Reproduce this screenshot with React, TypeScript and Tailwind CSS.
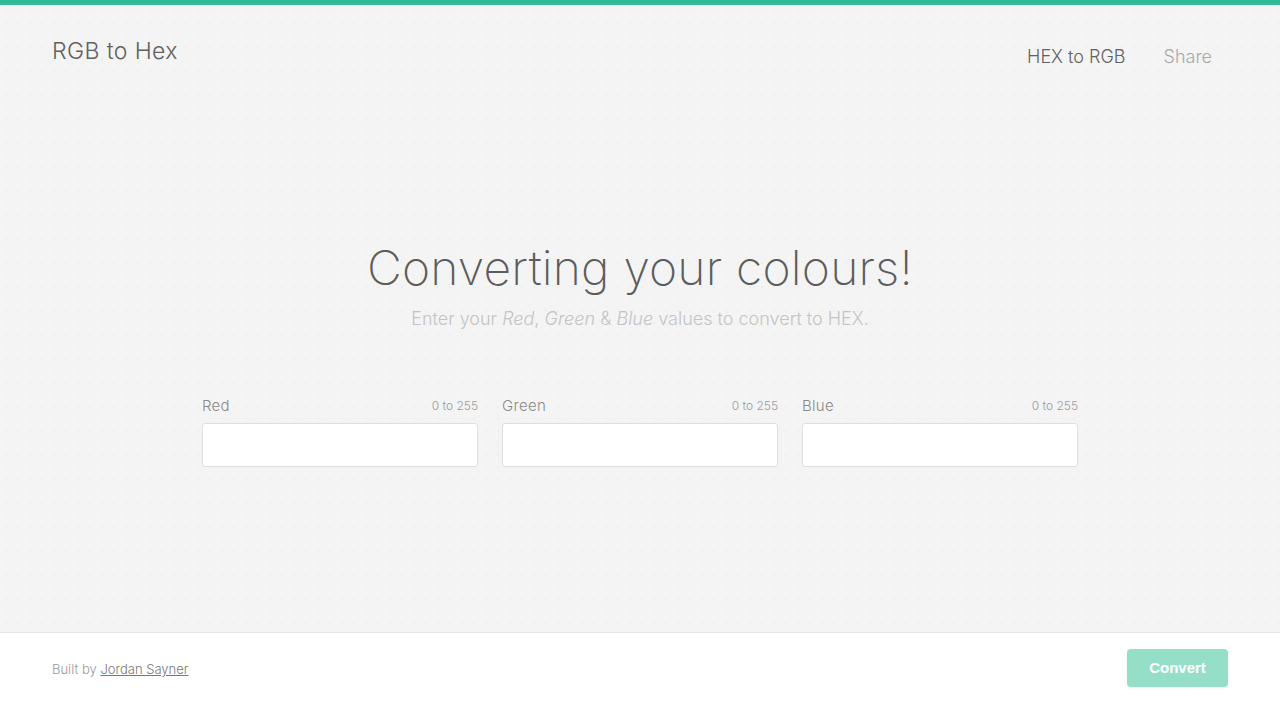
import React from "react";

const fields = [
  { label: "Red", hint: "0 to 255" },
  { label: "Green", hint: "0 to 255" },
  { label: "Blue", hint: "0 to 255" },
];

export default function App() {
  return (
    <div className="flex h-[703px] flex-col bg-white font-['Inter','Open_Sans',sans-serif] font-light text-[#616161]">
      <div className="h-[5px] bg-[#2fbb98]" />

      <main className="flex flex-1 flex-col bg-[#f4f4f4] bg-[radial-gradient(#eeeeee_1px,transparent_1px)] bg-[length:12px_12px]">
        <header className="flex items-start justify-between pl-[52px] pr-[68px] pt-[33px]">
          <h1 className="text-[23px] leading-[26px] tracking-[0.4px]">RGB to Hex</h1>
          <nav className="mt-[8px] flex gap-[38px] text-[18px] leading-[22px]">
            <a className="text-[#616161]">HEX to RGB</a>
            <a className="text-[#a8a8a8]">Share</a>
          </nav>
        </header>

        <section className="mt-[172px] flex flex-col items-center">
          <h2 className="text-[48px] leading-[56px] font-extralight tracking-[0.2px] text-[#5c5c5c]">
            Converting your colours!
          </h2>
          <p className="mt-[11px] text-[18px] leading-[24px] text-[#c4c4c4]">
            Enter your <em>Red</em>, <em>Green</em> &amp; <em>Blue</em> values to convert to HEX.
          </p>
        </section>

        <form className="mx-auto mt-[65px] grid w-[876px] grid-cols-3 gap-[24px]">
          {fields.map((f) => (
            <label key={f.label} className="flex flex-col">
              <div className="mb-[7px] flex items-end justify-between">
                <span className="text-[15px] leading-[20px] tracking-[0.3px] text-[#8a8a8a]">{f.label}</span>
                <span className="mb-[2px] text-[12px] leading-[16px] text-[#9a9a9a]">{f.hint}</span>
              </div>
              <input
                type="text"
                className="h-[44px] rounded-[3px] border border-[#dedede] bg-white px-3 outline-none"
              />
            </label>
          ))}
        </form>
      </main>

      <footer className="flex h-[71px] items-center justify-between border-t border-[#e6e6e6] bg-white pl-[52px] pr-[52px]">
        <p className="mt-[4px] text-[13px] text-[#9a9a9a]">
          Built by <a className="text-[#777] underline">Jordan Sayner</a>
        </p>
        <button className="h-[38px] w-[101px] rounded-[4px] bg-[#95dfc9] font-['Liberation_Sans',sans-serif] text-[15px] font-bold text-white shadow-[0_1px_3px_rgba(0,0,0,0.06)]">
          Convert
        </button>
      </footer>
    </div>
  );
}
